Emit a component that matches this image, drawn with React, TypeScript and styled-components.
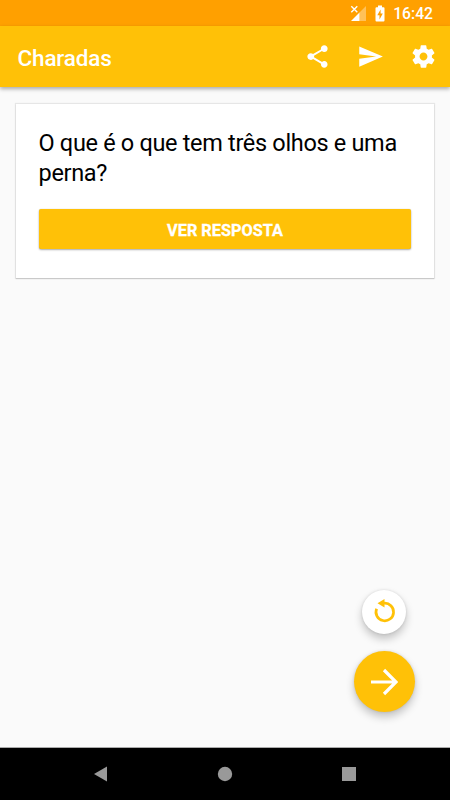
import React from "react";
import styled, { createGlobalStyle } from "styled-components";

const GlobalStyle = createGlobalStyle`
  * { box-sizing: border-box; }
  body { margin: 0; font-family: Roboto, sans-serif; background: #fafafa; }
`;

const Screen = styled.div`
  width: 450px;
  height: 800px;
  display: flex;
  flex-direction: column;
  overflow: hidden;
  background: #fafafa;
`;

const StatusBar = styled.div`
  flex: none;
  height: 26px;
  padding: 2px 17px 0 0;
  display: flex;
  align-items: center;
  justify-content: flex-end;
  background: #ffa000;
  color: #fff;
`;

const SignalIcon = styled.svg`
  width: 17px;
  height: 17px;
  margin: 0 8px 1px 0;
`;

const BatteryIcon = styled.svg`
  width: 10px;
  height: 17px;
  margin: 0 8px 1px 0;
`;

const Clock = styled.span`
  font-size: 15.7px;
  font-weight: 500;
  line-height: 18px;
`;

const AppBar = styled.header`
  flex: none;
  height: 61px;
  padding: 0 13px 0 17.5px;
  display: flex;
  align-items: center;
  justify-content: space-between;
  background: #ffc107;
  color: #fff;
  box-shadow: 0 2px 4px rgba(0, 0, 0, 0.32);
`;

const Title = styled.h1`
  margin: 2px 0 0;
  font-size: 22.5px;
  font-weight: 500;
  line-height: 28px;
  letter-spacing: -0.15px;
`;

const Actions = styled.div`
  display: flex;
  gap: 26px;
`;

const IconButton = styled.button`
  display: flex;
  padding: 0;
  border: 0;
  background: none;
  color: #fff;
`;

const MaterialIcon = styled.svg<{ $size: number }>`
  width: ${(p) => p.$size}px;
  height: ${(p) => p.$size}px;
  fill: currentColor;
`;

const Content = styled.main`
  flex: 1;
  padding: 17px 16px 35px;
  display: flex;
  flex-direction: column;
  justify-content: space-between;
`;

const Card = styled.section`
  height: 174px;
  padding: 24px 23px 0;
  background: #fff;
  box-shadow: 0 0 1px 1px rgba(0, 0, 0, 0.08), 0 1px 1px rgba(0, 0, 0, 0.12);
`;

const Question = styled.p`
  margin: 0 0 0 -0.5px;
  color: #000;
  font-size: 23.5px;
  line-height: 30px;
  letter-spacing: -0.32px;
`;

const AnswerButton = styled.button`
  display: block;
  width: 100%;
  height: 40px;
  margin-top: 21px;
  padding: 2px 0 0;
  border: 0;
  border-radius: 2px;
  background: #ffc107;
  color: #fff;
  font: 700 16.3px Roboto, sans-serif;
  -webkit-text-stroke: 0.3px #fff;
  box-shadow: 0 1px 2px rgba(0, 0, 0, 0.32), 0 0 1px rgba(0, 0, 0, 0.2);
`;

const FloatingActions = styled.div`
  align-self: flex-end;
  width: 62px;
  margin-right: 19px;
  display: flex;
  flex-direction: column;
  align-items: center;
  gap: 17.5px;
`;

const Fab = styled.button<{ $size: number; $primary?: boolean }>`
  width: ${(p) => p.$size}px;
  height: ${(p) => p.$size}px;
  padding: 0;
  border: 0;
  border-radius: 50%;
  display: flex;
  align-items: center;
  justify-content: center;
  background: ${(p) => (p.$primary ? "#ffc107" : "#fff")};
  color: ${(p) => (p.$primary ? "#fff" : "#ffc107")};
  box-shadow: 0 5px 9px rgba(0, 0, 0, 0.22), 0 0 3px rgba(0, 0, 0, 0.12);
`;

const NavBar = styled.nav`
  flex: none;
  height: 53px;
  padding: 0 93px 1px 92.5px;
  display: flex;
  align-items: center;
  justify-content: space-between;
  background: #000;
  border-top: 1px solid #aaa;
`;

const NavIcon = styled.svg`
  width: 16px;
  height: 16px;
  fill: #999;
`;

const ICONS = {
  share:
    "M18 16.08c-.76 0-1.44.3-1.96.77L8.91 12.7c.05-.23.09-.46.09-.7s-.04-.47-.09-.7l7.05-4.11c.54.5 1.25.81 2.04.81 1.66 0 3-1.34 3-3s-1.34-3-3-3-3 1.34-3 3c0 .24.04.47.09.7L8.04 9.81C7.5 9.31 6.79 9 6 9c-1.66 0-3 1.34-3 3s1.34 3 3 3c.79 0 1.5-.31 2.04-.81l7.12 4.16c-.05.21-.08.43-.08.65 0 1.61 1.31 2.92 2.92 2.92s2.92-1.31 2.92-2.92-1.31-2.92-2.92-2.92z",
  send: "M2.01 21L23 12 2.01 3 2 10l15 2-15 2z",
  settings:
    "M19.43 12.98c.04-.32.07-.64.07-.98s-.03-.66-.07-.98l2.11-1.65c.19-.15.24-.42.12-.64l-2-3.46c-.12-.22-.39-.3-.61-.22l-2.49 1c-.52-.4-1.08-.73-1.69-.98l-.38-2.65C14.46 2.18 14.25 2 14 2h-4c-.25 0-.46.18-.49.42l-.38 2.65c-.61.25-1.17.59-1.69.98l-2.49-1c-.23-.09-.49 0-.61.22l-2 3.46c-.13.22-.07.49.12.64l2.11 1.65c-.04.32-.07.65-.07.98s.03.66.07.98l-2.11 1.65c-.19.15-.24.42-.12.64l2 3.46c.12.22.39.3.61.22l2.49-1c.52.4 1.08.73 1.69.98l.38 2.65c.03.24.24.42.49.42h4c.25 0 .46-.18.49-.42l.38-2.65c.61-.25 1.17-.59 1.69-.98l2.49 1c.23.09.49 0 .61-.22l2-3.46c.12-.22.07-.49-.12-.64l-2.11-1.65zM12 15.5c-1.93 0-3.5-1.57-3.5-3.5s1.57-3.5 3.5-3.5 3.5 1.57 3.5 3.5-1.57 3.5-3.5 3.5z",
};

const ACTIONS: { icon: keyof typeof ICONS; label: string }[] = [
  { icon: "share", label: "Compartilhar" },
  { icon: "send", label: "Enviar" },
  { icon: "settings", label: "Configurações" },
];

export default function App() {
  return (
    <>
      <GlobalStyle />
      <Screen>
        <StatusBar>
          <SignalIcon viewBox="0 0 17 17">
            <path d="M9.5 7.5 16 1v15H9.5z" fill="#fff" opacity="0.35" />
            <path d="M9.5 7.5V16H1z" fill="#fff" />
            <path d="m1.300 1.300 6 6M7.300 1.300l-6 6" stroke="#fff" strokeWidth="1.4" />
          </SignalIcon>
          <BatteryIcon viewBox="0 0 10 17">
            <path
              d="M3 .5h4v1.7h1.5q1 0 1 1v12.3q0 1-1 1h-7q-1 0-1-1V3.2q0-1 1-1H3z"
              fill="#fff"
            />
            <path d="M5.6 4.5 2.3 10.2h2.2v4.3l3.3-6H5.6z" fill="#ffa000" />
          </BatteryIcon>
          <Clock>16:42</Clock>
        </StatusBar>
        <AppBar>
          <Title>Charadas</Title>
          <Actions>
            {ACTIONS.map(({ icon, label }) => (
              <IconButton key={icon} aria-label={label}>
                <MaterialIcon $size={27} viewBox="0 0 24 24">
                  <path d={ICONS[icon]} />
                </MaterialIcon>
              </IconButton>
            ))}
          </Actions>
        </AppBar>
        <Content>
          <Card>
            <Question>O que é o que tem três olhos e uma perna?</Question>
            <AnswerButton>VER RESPOSTA</AnswerButton>
          </Card>
          <FloatingActions>
            <Fab $size={44} aria-label="Reiniciar">
              <MaterialIcon $size={26} viewBox="0 0 26 26">
                <path
                  d="M5.6 9.7A8.8 8.8 0 1 0 13 4.2"
                  fill="none"
                  stroke="currentColor"
                  strokeWidth="2.7"
                />
                <path d="M6.500 4.2 13.500 0v8.400z" />
              </MaterialIcon>
            </Fab>
            <Fab $size={61} $primary aria-label="Próxima">
              <MaterialIcon $size={28} viewBox="0 0 28 28">
                <path
                  d="M1 14h25M14 2l12 12-12 12"
                  fill="none"
                  stroke="currentColor"
                  strokeWidth="3.2"
                />
              </MaterialIcon>
            </Fab>
          </FloatingActions>
        </Content>
        <NavBar>
          <NavIcon viewBox="0 0 16 16">
            <path d="M1 8 14 .5v15z" />
          </NavIcon>
          <NavIcon viewBox="0 0 16 16">
            <circle cx="8" cy="8" r="7.2" />
          </NavIcon>
          <NavIcon viewBox="0 0 16 16">
            <path d="M1 1h14v14H1z" />
          </NavIcon>
        </NavBar>
      </Screen>
    </>
  );
}
